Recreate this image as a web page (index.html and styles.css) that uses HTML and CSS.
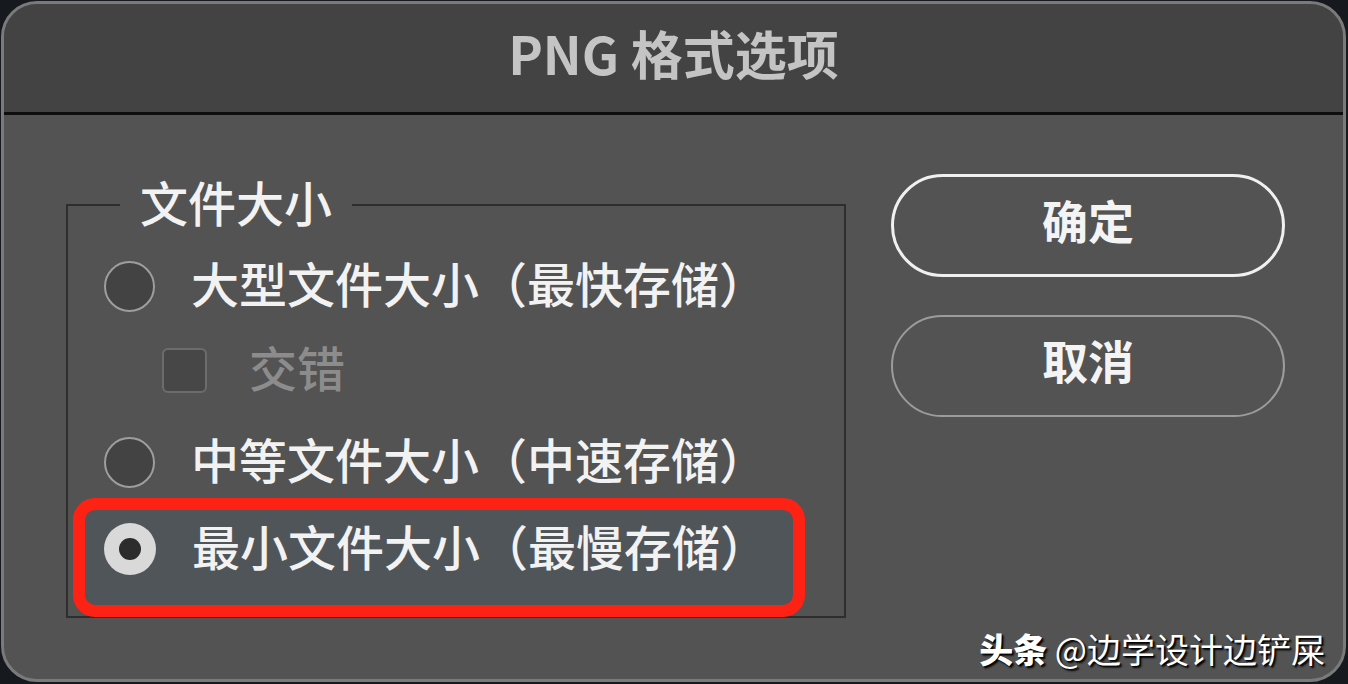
FILE: index.html
```html
<!DOCTYPE html>
<html lang="zh-CN">
<head>
<meta charset="utf-8">
<title>PNG 格式选项</title>
<link rel="stylesheet" href="styles.css">
</head>
<body>
<div class="window">
  <div class="titlebar">PNG 格式选项</div>
  <div class="content">
    <fieldset class="group">
      <legend class="legend">文件大小</legend>
      <div class="row row-1">
        <span class="radio"></span>
        <span class="label">大型文件大小（最快存储）</span>
      </div>
      <div class="row row-2">
        <span class="checkbox"></span>
        <span class="label label-disabled">交错</span>
      </div>
      <div class="row row-3">
        <span class="radio"></span>
        <span class="label">中等文件大小（中速存储）</span>
      </div>
      <div class="row row-4 highlighted">
        <span class="radio radio-on"><span class="dot"></span></span>
        <span class="label">最小文件大小（最慢存储）</span>
      </div>
    </fieldset>
    <div class="buttons">
      <div class="btn btn-primary">确定</div>
      <div class="btn btn-secondary">取消</div>
    </div>
  </div>
  <div class="watermark"><b>头条</b> @边学设计边铲屎</div>
</div>
</body>
</html>
```
FILE: styles.css
```css
html, body {
  margin: 0;
  padding: 0;
}
body {
  width: 1348px;
  height: 684px;
  overflow: hidden;
  background: #161a1e;
  font-family: "Noto Sans CJK SC", "Noto Sans", sans-serif;
}
.window {
  position: relative;
  box-sizing: border-box;
  margin: 1px 0 0 1px;
  width: 1345px;
  height: 681px;
  border: 3px solid #7a7a7a;
  border-radius: 36px;
  background: #535353;
  overflow: hidden;
}
.titlebar {
  box-sizing: border-box;
  height: 111px;
  padding-bottom: 10px;
  background: #434343;
  border-bottom: 3px solid #0e0e0e;
  color: #c4c4c4;
  font-size: 52px;
  font-weight: 700;
  line-height: 98px;
  text-align: center;
}
.content {
  display: flex;
  align-items: flex-start;
  padding: 59px 0 0 62px;
}
.group {
  box-sizing: border-box;
  width: 780px;
  height: 438px;
  margin: 6px 0 0 0;
  padding: 0 0 0 36px;
  border: 2px solid #2e2e2e;
  min-inline-size: 0;
}
.legend {
  margin-left: 16px;
  padding: 0 20px 8px;
  font-size: 48px;
  font-weight: 500;
  line-height: 42px;
  color: #f2f2f2;
}
.row {
  display: flex;
  align-items: center;
  height: 52px;
}
.row-1 { margin-top: 30px; }
.row-2 { margin-top: 32px; }
.row-3 { margin-top: 40px; }
.row-4 { margin-top: 35px; }
.label {
  font-size: 48px;
  font-weight: 500;
  line-height: 44px;
  padding-bottom: 9px;
  color: #f2f2f2;
  white-space: nowrap;
}
.label-disabled {
  color: #8c8c8c;
}
.radio {
  box-sizing: border-box;
  flex: none;
  width: 51px;
  height: 51px;
  border-radius: 50%;
  border: 2px solid #9e9e9e;
  background: #434343;
  margin-right: 36px;
  display: flex;
  align-items: center;
  justify-content: center;
}
.radio-on {
  border: none;
  background: #d9d9d9;
  width: 52px;
  height: 52px;
}
.dot {
  width: 22px;
  height: 22px;
  border-radius: 50%;
  background: #2c2c2c;
}
.checkbox {
  box-sizing: border-box;
  flex: none;
  width: 45px;
  height: 45px;
  margin-left: 58px;
  margin-right: 42px;
  border: 2px solid #6c6c6c;
  border-radius: 6px;
  background: #474747;
}
.highlighted {
  position: relative;
  z-index: 0;
}
.highlighted::before {
  content: "";
  position: absolute;
  left: -31px;
  top: -25px;
  width: 732px;
  height: 119px;
  box-sizing: border-box;
  border: 12px solid #fe2215;
  border-radius: 22px;
  background: #50555a;
  z-index: -1;
}
.buttons {
  display: flex;
  flex-direction: column;
  gap: 38px;
  margin-left: 45px;
}
.btn {
  box-sizing: border-box;
  width: 394px;
  height: 103px;
  padding-bottom: 14px;
  border-radius: 52px;
  display: flex;
  align-items: center;
  justify-content: center;
  font-size: 46px;
  line-height: 50px;
  font-weight: 700;
  color: #f4f4f4;
}
.btn-primary {
  border: 3px solid #f0f0f0;
}
.btn-secondary {
  height: 102px;
  border: 2px solid #9c9c9c;
}
.watermark {
  position: absolute;
  right: 18px;
  bottom: 8px;
  font-size: 34px;
  line-height: 44px;
  color: #ffffff;
  text-shadow: 2px 2px 2px #000, 1px 1px 0 #222;
  white-space: nowrap;
}
.watermark b {
  font-weight: 900;
}
```
